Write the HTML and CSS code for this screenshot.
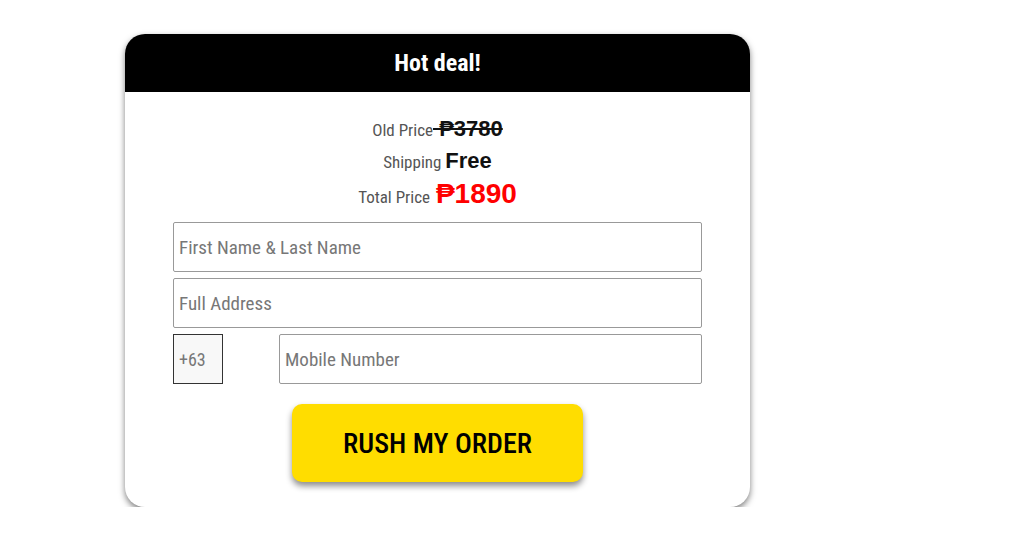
FILE: index.html
```html
<!DOCTYPE html>
<html lang="en">
<head>
    <meta charset="UTF-8">
    <title>Hot deal</title>
    <link rel="stylesheet" href="styles.css">
</head>
<body>

    <div class="order-card">
        <div class="order-header">
            <h2>Hot deal!</h2>
        </div>

        <div class="prices">
            <p>Old Price<span class="old"> ₱3780</span></p>
            <p>Shipping <span class="free">Free</span></p>
            <p class="total-line">Total Price <span class="total">₱1890</span></p>
        </div>

        <form class="order-form">
            <input type="text" placeholder="First Name &amp; Last Name">
            <input type="text" placeholder="Full Address">
            <div class="phone-row">
                <input type="text" class="code" value="+63" readonly>
                <input type="tel" class="mobile" placeholder="Mobile Number">
            </div>
            <div class="button-container">
                <button type="button">RUSH MY ORDER</button>
            </div>
        </form>
    </div>

</body>
</html>
```

FILE: styles.css
```css
body {
    margin: 0;
    background-color: #fff;
    font-family: Roboto, "Open Sans", sans-serif;
    font-stretch: 75%;
}
.order-card {
    width: 625px;
    margin: 34px 0 0 125px;
    background-color: #fff;
    border-radius: 20px;
    overflow: hidden;
    box-shadow: 0 3px 6px rgba(0, 0, 0, 0.5);
    padding-bottom: 25px;
}
.order-header {
    background-color: #000;
    height: 58px;
    display: flex;
    align-items: center;
    justify-content: center;
}
.order-header h2 {
    margin: 0;
    color: #fff;
    font-size: 24px;
    font-weight: bold;
}
.prices {
    padding-top: 22px;
    text-align: center;
    color: #555;
    font-size: 17px;
}
.prices p {
    margin: 0;
    height: 32px;
    line-height: 32px;
}
.old, .free, .total {
    font-family: "Liberation Sans", Arial, sans-serif;
    font-stretch: normal;
    font-weight: bold;
    color: #111;
    font-size: 22px;
    line-height: 1;
}
.old {
    text-decoration: line-through;
}
.prices .total-line {
    height: 36px;
    line-height: 38px;
}
.total {
    color: #ff0000;
    font-size: 28px;
    margin-left: 2px;
}
.order-form {
    margin: 8px 48px 0;
    display: flex;
    flex-direction: column;
    gap: 6px;
}
input {
    box-sizing: border-box;
    height: 50px;
    width: 100%;
    margin: 0;
    padding: 0 5px;
    border: 1px solid #999;
    border-radius: 2px;
    font-family: Roboto, "Open Sans", sans-serif;
    font-stretch: 75%;
    font-size: 19px;
    color: #333;
}
input::placeholder {
    color: #777;
}
.phone-row {
    display: flex;
    gap: 56px;
}
.phone-row .code {
    width: 50px;
    flex: none;
    border: 1px solid #333;
    border-radius: 0;
    background-color: #f8f8f8;
    color: #777;
    font-size: 18px;
}
.button-container {
    display: flex;
    justify-content: center;
    margin-top: 14px;
}
.button-container button {
    width: 291px;
    height: 78px;
    background-color: #ffdd00;
    border: none;
    border-radius: 10px;
    box-shadow: 0 4px 6px rgba(0, 0, 0, 0.45);
    font-family: Roboto, "Open Sans", sans-serif;
    font-stretch: 75%;
    font-weight: 500;
    font-size: 28px;
    color: #000;
    cursor: pointer;
}
```
